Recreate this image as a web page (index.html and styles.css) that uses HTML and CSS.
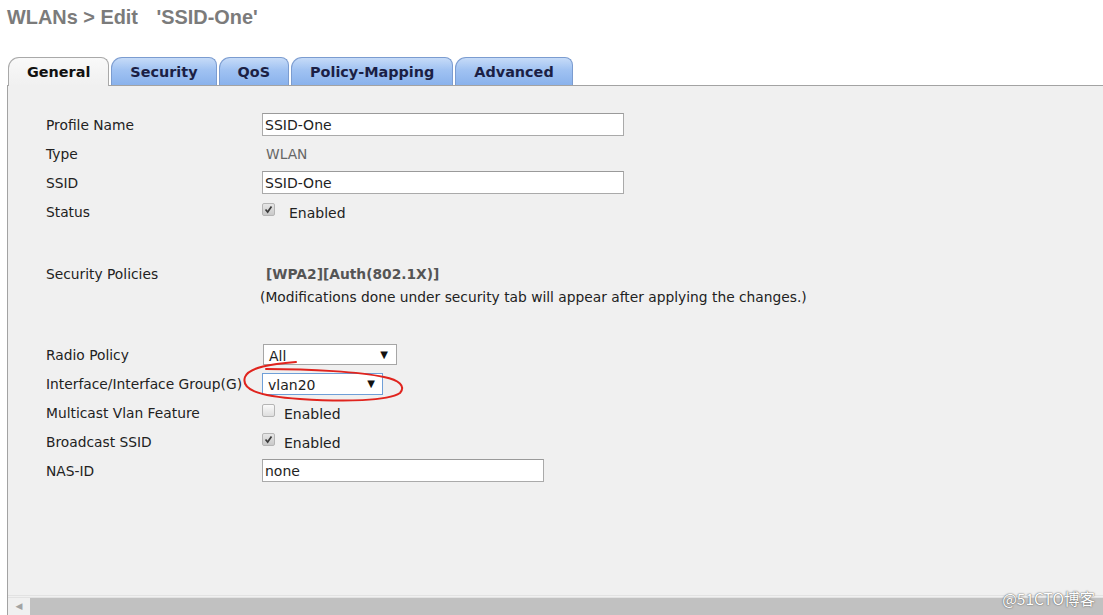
FILE: index.html
```html
<!DOCTYPE html>
<html>
<head>
<meta charset="utf-8">
<title>WLANs &gt; Edit</title>
<link rel="stylesheet" href="styles.css">
</head>
<body>
<div class="page">
  <h1 class="title">WLANs &gt; Edit <span class="ssid-name">'SSID-One'</span></h1>

  <div class="tabs">
    <div class="tab active">General</div>
    <div class="tab">Security</div>
    <div class="tab">QoS</div>
    <div class="tab">Policy-Mapping</div>
    <div class="tab">Advanced</div>
  </div>

  <div class="panel">
    <div class="content">
      <div class="row">
        <div class="label">Profile Name</div>
        <div class="field"><div class="input w-wide">SSID-One</div></div>
      </div>
      <div class="row">
        <div class="label">Type</div>
        <div class="field"><span class="static">WLAN</span></div>
      </div>
      <div class="row">
        <div class="label">SSID</div>
        <div class="field"><div class="input w-wide">SSID-One</div></div>
      </div>
      <div class="row">
        <div class="label">Status</div>
        <div class="field">
          <span class="check checked"><svg viewBox="0 0 13 13" width="13" height="13"><path d="M3 6.5 L5.5 9.5 L10 3" fill="none" stroke="#3a3a3a" stroke-width="2"/></svg></span>
          <span class="check-text wide-gap">Enabled</span>
        </div>
      </div>

      <div class="row sec-row">
        <div class="label">Security Policies</div>
        <div class="field"><span class="policy">[WPA2][Auth(802.1X)]</span></div>
      </div>
      <div class="note-row">
        <div class="label"></div>
        <div class="note">(Modifications done under security tab will appear after applying the changes.)</div>
      </div>

      <div class="row radio-row">
        <div class="label">Radio Policy</div>
        <div class="field"><div class="select sel-radio"><span>All</span><span class="arrow">&#9660;</span></div></div>
      </div>
      <div class="row">
        <div class="label">Interface/Interface Group(G)</div>
        <div class="field"><div class="select sel-iface focused"><span>vlan20</span><span class="arrow">&#9660;</span></div></div>
      </div>
      <div class="row">
        <div class="label">Multicast Vlan Feature</div>
        <div class="field">
          <span class="check"></span>
          <span class="check-text">Enabled</span>
        </div>
      </div>
      <div class="row">
        <div class="label">Broadcast SSID</div>
        <div class="field">
          <span class="check checked"><svg viewBox="0 0 13 13" width="13" height="13"><path d="M3 6.5 L5.5 9.5 L10 3" fill="none" stroke="#3a3a3a" stroke-width="2"/></svg></span>
          <span class="check-text">Enabled</span>
        </div>
      </div>
      <div class="row">
        <div class="label">NAS-ID</div>
        <div class="field"><div class="input w-nas">none</div></div>
      </div>
    </div>

    <div class="hscroll">
      <div class="hscroll-btn">&#9664;</div>
      <div class="hscroll-thumb"></div>
    </div>
  </div>

  <svg class="scribble" width="1103" height="615" viewBox="0 0 1103 615">
    <path d="M296 362 C 272 364, 249 367, 245 377 C 241 389, 256 396, 300 399 C 345 402, 388 401, 400 393 C 406 386, 399 380, 384 377 C 360 372, 312 369, 266 369" fill="none" stroke="#e0241e" stroke-width="2" stroke-linecap="round"/>
  </svg>

  <div class="watermark">@51CTO博客</div>
</div>
</body>
</html>
```

FILE: styles.css
```css
html, body {
  margin: 0;
  padding: 0;
  background: #ffffff;
}

body {
  width: 1103px;
  height: 615px;
  overflow: hidden;
  font-family: "DejaVu Sans", Verdana, sans-serif;
}

.page {
  position: relative;
  height: 615px;
  display: flex;
  flex-direction: column;
  padding-left: 7px;
  box-sizing: border-box;
}

.title {
  margin: 0;
  padding-top: 5px;
  height: 24px;
  line-height: 24px;
  font-family: "Liberation Sans", Arial, sans-serif;
  font-size: 19.9px;
  font-weight: bold;
  color: #7b7b7b;
  white-space: nowrap;
}

.ssid-name {
  margin-left: 13px;
}

.tabs {
  display: flex;
  gap: 2px;
  margin-top: 28px;
  padding-left: 1px;
  margin-bottom: -1px;
  position: relative;
  z-index: 1;
}

.tab {
  height: 27px;
  line-height: 28px;
  padding: 0 18px;
  font-size: 14.4px;
  font-weight: bold;
  color: #1b1f45;
  background: linear-gradient(#c6dbf8, #a0c2f2 45%, #8ab2ec);
  border: 1px solid #7b9cd0;
  border-bottom: none;
  border-radius: 11px 8px 0 0;
  white-space: nowrap;
}

.tab.active {
  background: linear-gradient(#f9f9f9, #f0f0f0);
  border-color: #a9a9a9;
  color: #111;
  height: 28px;
}

.panel {
  flex: 1;
  display: flex;
  flex-direction: column;
  background: #f0f0f0;
  border-left: 1px solid #a3a3a3;
  border-top: 1px solid #a3a3a3;
}

.content {
  flex: 1;
  padding-top: 24px;
  padding-left: 38px;
  font-size: 13.8px;
  color: #222;
}

.row {
  display: flex;
  align-items: center;
  height: 29px;
}

.label {
  width: 216px;
  flex: none;
  white-space: nowrap;
}

.field {
  display: flex;
  align-items: center;
}

.sec-row {
  margin-top: 34px;
  height: 28px;
}

.note-row {
  display: flex;
  height: 18px;
  align-items: center;
}

.radio-row {
  margin-top: 34px;
}

.input {
  box-sizing: border-box;
  height: 23px;
  line-height: 22px;
  padding: 0 2px;
  background: #fff;
  border: 1px solid #aaaaaa;
  border-top-color: #9a9a9a;
  font-size: 14px;
  color: #222;
}

.w-wide {
  width: 362px;
}

.w-nas {
  width: 282px;
}

.static {
  margin-left: 4px;
  color: #666;
}

.check {
  box-sizing: border-box;
  width: 13px;
  height: 13px;
  border: 1px solid #b5b5b5;
  border-radius: 2px;
  background: linear-gradient(#fafafa, #dedede);
  display: inline-flex;
  align-items: center;
  justify-content: center;
  margin-top: -4px;
}

.check.checked {
  background: linear-gradient(#e6e6e6, #c9c9c9);
}

.check svg {
  width: 11px;
  height: 11px;
}

.check-text {
  margin-left: 9px;
  margin-top: 3px;
  font-size: 14px;
}

.check-text.wide-gap {
  margin-left: 14px;
}

.policy {
  margin-left: 4px;
  font-weight: bold;
  color: #555;
}

.note {
  margin-left: -2px;
  white-space: nowrap;
  color: #222;
}

.select {
  box-sizing: border-box;
  display: flex;
  align-items: center;
  justify-content: space-between;
  background: #fff;
  border: 1px solid #a6a6a6;
  font-size: 14px;
  color: #222;
}

.select > span:first-child {
  margin-top: 2px;
}

.select .arrow {
  font-size: 10px;
  color: #111;
}

.sel-radio {
  width: 134px;
  height: 21px;
  margin-left: 1px;
  padding: 0 8px 0 5px;
}

.sel-iface {
  width: 121px;
  height: 22px;
  padding: 0 7px 0 5px;
}

.focused {
  border-color: #6f9fd8;
}

.hscroll {
  display: flex;
  height: 17px;
  border-top: 3px double #e2e2e2;
  margin-top: 0;
}

.hscroll-btn {
  width: 22px;
  flex: none;
  background: #f0f0f0;
  color: #a3a3a3;
  font-size: 9px;
  line-height: 17px;
  text-align: center;
}

.hscroll-thumb {
  flex: 1;
  background: #c1c1c1;
}

.scribble {
  position: absolute;
  left: 0;
  top: 0;
  pointer-events: none;
  z-index: 5;
}

.watermark {
  position: absolute;
  right: 8px;
  top: 587px;
  font-family: "Noto Sans CJK SC", "Noto Sans", sans-serif;
  font-size: 15.5px;
  color: #ffffff;
  text-shadow: 0 0 1px #555, 0 0 2px #777;
  z-index: 6;
}
```
